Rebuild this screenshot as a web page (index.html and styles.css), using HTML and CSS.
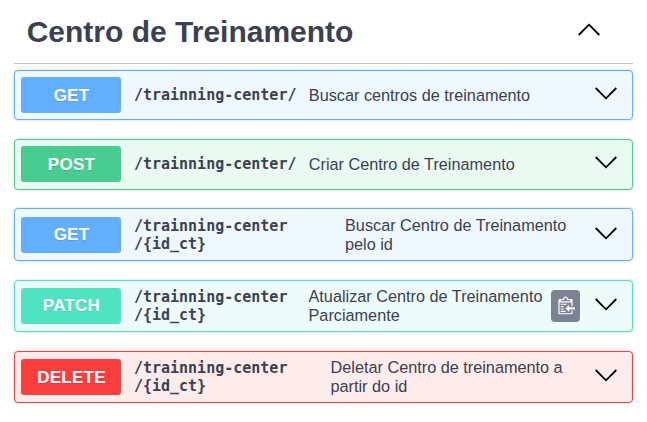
FILE: index.html
```html
<!DOCTYPE html>
<html lang="pt-BR">
<head>
<meta charset="utf-8">
<title>Centro de Treinamento</title>
<link rel="stylesheet" href="styles.css">
</head>
<body>
<main class="section">
  <header class="section-header">
    <h1 class="title">Centro de Treinamento</h1>
    <svg class="arrow" viewBox="0 0 22 13"><path d="M.7 12 11 1.700 21.300 12"/></svg>
  </header>
  <div class="operations">
    <div class="op get">
      <span class="method">GET</span>
      <span class="path">/trainning-center/</span>
      <span class="desc">Buscar centros de treinamento</span>
      <svg class="arrow" viewBox="0 0 22 13"><path d="M.7 1 11 11.300 21.300 1"/></svg>
    </div>
    <div class="op post">
      <span class="method">POST</span>
      <span class="path">/trainning-center/</span>
      <span class="desc">Criar Centro de Treinamento</span>
      <svg class="arrow" viewBox="0 0 22 13"><path d="M.7 1 11 11.300 21.300 1"/></svg>
    </div>
    <div class="op get by-id">
      <span class="method">GET</span>
      <span class="path">/trainning-center<br>/{id_ct}</span>
      <span class="desc">Buscar Centro de Treinamento<br>pelo id</span>
      <svg class="arrow" viewBox="0 0 22 13"><path d="M.7 1 11 11.300 21.300 1"/></svg>
    </div>
    <div class="op patch">
      <span class="method">PATCH</span>
      <span class="path">/trainning-center<br>/{id_ct}</span>
      <span class="desc">Atualizar Centro de Treinamento<br>Parciamente</span>
      <span class="copy">
        <svg viewBox="0 0 16 16" width="19" height="20"><path fill="#fff" fill-rule="evenodd" d="M8 12H4v1h4v-1zM9 6H4v1h5V6zm2 3V7l-3 3 3 3v-2h5V9h-5zM6.500 8H4v1h2.500V8zM4 11h2.500v-1H4v1zm9 1h1v2c-.020.280-.110.520-.300.700-.190.180-.420.280-.700.300H3c-.550 0-1-.450-1-1V3c0-.550.450-1 1-1h3c0-1.110.890-2 2-2 1.110 0 2 .890 2 2h3c.550 0 1 .450 1 1v5h-1V5H3v9h10v-2zM4 4h8c0-.550-.450-1-1-1h-1c-.550 0-1-.450-1-1s-.450-1-1-1-1 .450-1 1-.450 1-1 1H5c-.550 0-1 .450-1 1z"/></svg>
      </span>
      <svg class="arrow" viewBox="0 0 22 13"><path d="M.7 1 11 11.300 21.300 1"/></svg>
    </div>
    <div class="op delete">
      <span class="method">DELETE</span>
      <span class="path">/trainning-center<br>/{id_ct}</span>
      <span class="desc">Deletar Centro de treinamento a<br>partir do id</span>
      <svg class="arrow" viewBox="0 0 22 13"><path d="M.7 1 11 11.300 21.300 1"/></svg>
    </div>
  </div>
</main>
</body>
</html>
```
FILE: styles.css
```css
* {
  box-sizing: border-box;
}

body {
  margin: 0;
  background: #fff;
  color: #3b4151;
  font-family: "Liberation Sans", Arial, sans-serif;
}

.section {
  width: 619px;
  margin-left: 14px;
}

.section-header {
  display: flex;
  align-items: center;
  justify-content: space-between;
  height: 64px;
  padding: 0 33.5px 5px 12.700px;
  border-bottom: 1px solid #c1c3c7;
}

.title {
  margin: 0;
  padding-top: 5px;
  font-size: 30px;
  line-height: 36px;
}

.arrow {
  flex: none;
  width: 22px;
  height: 13px;
  fill: none;
  stroke: #000;
  stroke-width: 1.8;
}

.operations {
  display: grid;
  grid-template-rows: 50px 51px 53px 52px 52px;
  row-gap: 19px;
  padding-top: 6px;
}

.op {
  display: flex;
  align-items: center;
  padding: 0 15.5px 0 6px;
  border: 1px solid var(--tone);
  border-radius: 4px;
  background: var(--tint);
  box-shadow: 0 0 3px rgba(0, 0, 0, .19);
}

.op .arrow {
  margin: 0 0 3px auto;
}

.get { --tone: #61affe; --tint: #eff7ff; }
.post { --tone: #49cc90; --tint: #ebf9f3; }
.patch { --tone: #50e3c2; --tint: #edfcf9; }
.delete { --tone: #f93e3e; --tint: #feebeb; }

.post {
  padding-bottom: 1px;
}

.by-id,
.by-id ~ .op {
  margin-top: -1px;
  margin-bottom: 1px;
}

.method {
  flex: none;
  width: 100px;
  height: 36px;
  padding-left: 1px;
  border-radius: 3px;
  background: var(--tone);
  color: #fff;
  font-size: 17px;
  font-weight: 700;
  letter-spacing: .25px;
  line-height: 38px;
  text-align: center;
  text-shadow: 0 1px 0 rgba(0, 0, 0, .1);
}

.by-id .method,
.patch .method {
  line-height: 36px;
}

.path {
  flex: none;
  width: 187.5px;
  padding-left: 12.900px;
  font: 700 15px/18px "DejaVu Sans Mono", monospace;
  white-space: nowrap;
}

.desc {
  margin-left: .3px;
  font-size: 16.25px;
  line-height: 19px;
  white-space: nowrap;
}

.by-id .desc {
  margin-left: 36.5px;
}

.patch .desc {
  margin-left: 0;
}

.delete .desc {
  margin-left: 22px;
}

.copy {
  display: flex;
  flex: none;
  align-items: center;
  justify-content: center;
  width: 29px;
  height: 32px;
  margin-left: 9px;
  border-radius: 4px;
  background: #7d8293;
}
```
